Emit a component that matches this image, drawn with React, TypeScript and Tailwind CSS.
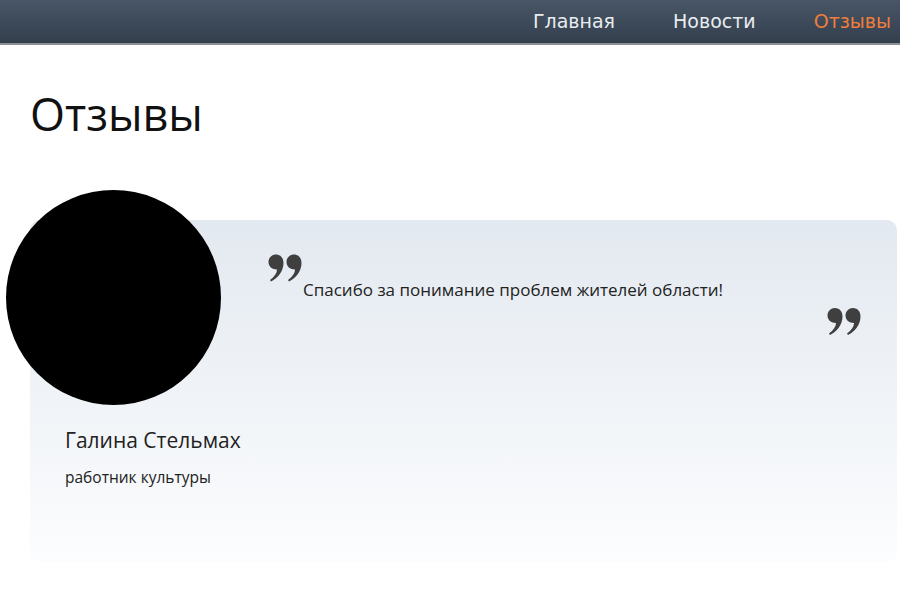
import React from "react";

function Quote({ className }: { className?: string }) {
  return (
    <svg viewBox="0 0 34 28" className={className} fill="#3f3f3f">
      <path d="M8 0.5C12.5 0.5 15.5 4 15.5 9C15.5 17 10 24 3 27.5L2 26C6.5 22.5 9 19 9 15.5C4 15.5 0.5 12.5 0.5 8C0.5 3.8 3.8 0.5 8 0.5Z" />
      <path transform="translate(18 0)" d="M8 0.5C12.5 0.5 15.5 4 15.5 9C15.5 17 10 24 3 27.5L2 26C6.5 22.5 9 19 9 15.5C4 15.5 0.5 12.5 0.5 8C0.5 3.8 3.8 0.5 8 0.5Z" />
    </svg>
  );
}

export default function App() {
  return (
    <div className="w-[900px] h-[600px] overflow-hidden bg-white" style={{ fontFamily: "'Open Sans', 'Noto Sans', sans-serif" }}>
      <header className="h-[45px] bg-gradient-to-b from-[#485667] to-[#333f4d] border-b-2 border-[#8c9196] flex items-center justify-end pr-[9px] gap-[58px] text-[19px]" style={{ fontFamily: "'DejaVu Sans', sans-serif" }}>
        <span className="text-[#e9edf0]">Главная</span>
        <span className="text-[#e9edf0]">Новости</span>
        <span className="text-[#f27d3b]">Отзывы</span>
      </header>
      <main className="pl-[30px]">
        <h1 className="pt-[40px] text-[45px] leading-[58px] font-normal text-[#111]">Отзывы</h1>
        <section className="mt-[77px] h-[342px] mr-[3px] rounded-[10px] bg-gradient-to-b from-[#e3e9f0] to-[#fcfdfe] flex">
          <div className="w-[238px] shrink-0">
            <div className="-mt-[30px] -ml-[24px] w-[215px] h-[215px] rounded-full bg-black" />
            <div className="ml-[35px] mt-[20px] text-[21px] leading-[30px] text-[#222]">Галина Стельмах</div>
            <div className="ml-[35px] mt-[12px] text-[15.5px] leading-[20px] text-[#222]">работник культуры</div>
          </div>
          <div className="flex-1 pt-[34px] pr-[36px]">
            <Quote className="w-[34px] h-[28px]" />
            <p className="ml-[35px] -mt-[3px] text-[17px] leading-[22px] text-[#222]">Спасибо за понимание проблем жителей области!</p>
            <div className="flex justify-end mt-[6px]">
              <Quote className="w-[34px] h-[29px]" />
            </div>
          </div>
        </section>
      </main>
    </div>
  );
}
